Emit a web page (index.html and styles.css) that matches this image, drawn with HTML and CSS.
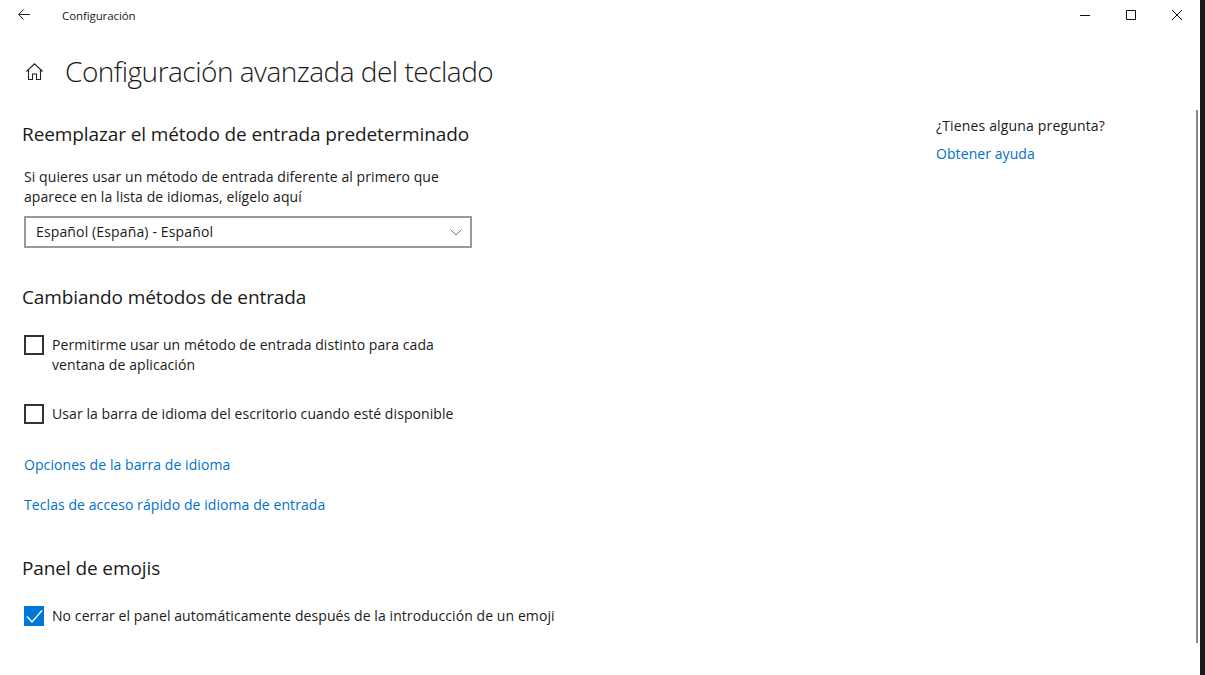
FILE: index.html
```html
<!DOCTYPE html>
<html lang="es">
<head>
    <meta charset="UTF-8">
    <title>Configuración</title>
    <link rel="stylesheet" href="styles.css">
</head>
<body>
    <div class="window">
        <header class="titlebar">
            <svg class="back-icon" viewBox="0 0 12 12">
                <path d="M5.500 .5L.7 5.500l4.800 5M.7 5.500H12"></path>
            </svg>
            <span class="app-name">Configuración</span>
            <div class="window-controls">
                <svg class="ctl" viewBox="0 0 10 10"><path d="M0 5.500h10"></path></svg>
                <svg class="ctl" viewBox="0 0 10 10"><path d="M.5 .5h9v9h-9z"></path></svg>
                <svg class="ctl" viewBox="0 0 10 10"><path d="M0 0l10 10M10 0L0 10"></path></svg>
            </div>
        </header>

        <div class="page-head">
            <svg class="home-icon" viewBox="0 0 17 17">
                <path d="M.4 8.500L8.500 .8l8.100 7.700M2.500 6.800v9.700h4V11h4v5.500h4V6.800"></path>
            </svg>
            <h1>Configuración avanzada del teclado</h1>
        </div>

        <div class="content">
            <main class="settings">
                <h2 class="first">Reemplazar el método de entrada predeterminado</h2>
                <p class="desc">Si quieres usar un método de entrada diferente al primero que aparece en la lista de idiomas, elígelo aquí</p>
                <div class="select">
                    <span>Español (España) - Español</span>
                    <svg class="chevron" viewBox="0 0 12 7"><path d="M.5 .5L6 6l5.500-5.500"></path></svg>
                </div>

                <h2 class="switching">Cambiando métodos de entrada</h2>
                <div class="check check-one">
                    <span class="box"></span>
                    <span class="check-label">Permitirme usar un método de entrada distinto para cada ventana de aplicación</span>
                </div>
                <div class="check check-two">
                    <span class="box"></span>
                    <span class="check-label wide">Usar la barra de idioma del escritorio cuando esté disponible</span>
                </div>
                <a class="link link-one" href="#">Opciones de la barra de idioma</a>
                <a class="link link-two" href="#">Teclas de acceso rápido de idioma de entrada</a>

                <h2 class="emoji">Panel de emojis</h2>
                <div class="check check-three">
                    <span class="box checked">
                        <svg viewBox="0 0 20 20"><path d="M3 10.500l5 5.500L18 4.500"></path></svg>
                    </span>
                    <span class="check-label wide">No cerrar el panel automáticamente después de la introducción de un emoji</span>
                </div>
            </main>
            <aside class="help">
                <div class="help-title">¿Tienes alguna pregunta?</div>
                <a class="link" href="#">Obtener ayuda</a>
            </aside>
        </div>
        <div class="scrollbar"></div>
    </div>
</body>
</html>
```

FILE: styles.css
```css
html, body {
    margin: 0;
    height: 100%;
}
body {
    background-color: #1b1b1b; /* dark strip right of the window */
    font-family: 'Open Sans', 'Noto Sans', sans-serif;
    font-size: 14px;
    letter-spacing: 0.08px;
    color: #1a1a1a;
    overflow: hidden;
}
.window {
    position: relative;
    width: 1200px;
    height: 675px;
    background-color: #ffffff;
}
.titlebar {
    display: flex;
    align-items: center;
    height: 30px;
}
.back-icon {
    width: 12px;
    height: 12px;
    margin-left: 18px;
    fill: none;
    stroke: #222;
    stroke-width: 1;
}
.app-name {
    margin-left: 32px;
    font-size: 11.500px;
    letter-spacing: -0.1px;
}
.window-controls {
    display: flex;
    gap: 36px;
    margin-left: auto;
    margin-right: 18px;
}
.ctl {
    width: 10px;
    height: 10px;
    fill: none;
    stroke: #111;
    stroke-width: 1;
}
.page-head {
    display: flex;
    align-items: center;
    height: 40px;
    margin-top: 21px;
}
.home-icon {
    width: 17px;
    height: 17px;
    margin-left: 26px;
    fill: none;
    stroke: #222;
    stroke-width: 1.1;
}
h1 {
    margin: 0 0 0 22px;
    font-size: 28px;
    font-weight: 300;
    letter-spacing: -0.5px;
    line-height: 40px;
}
.content {
    display: flex;
}
.settings {
    width: 936px;
    padding-left: 24px;
    box-sizing: border-box;
}
h2 {
    margin: 0 0 0 -2px;
    font-size: 19px;
    font-weight: 400;
    line-height: 28px;
    letter-spacing: -0.1px;
}
h2.first {
    margin-top: 29px;
}
h2.switching {
    margin-top: 35px;
}
h2.emoji {
    margin-top: 39px;
}
.desc {
    width: 440px;
    margin: 19px 0 0;
    line-height: 20px;
}
.select {
    display: flex;
    align-items: center;
    justify-content: space-between;
    width: 448px;
    height: 32px;
    margin-top: 9px;
    padding: 0 8px 2px 10px;
    box-sizing: border-box;
    border: 2px solid #999;
    letter-spacing: 0.14px;
}
.chevron {
    width: 12px;
    height: 7px;
    margin-top: 2px;
    fill: none;
    stroke: #777;
    stroke-width: 1;
}
.check {
    display: flex;
    align-items: flex-start;
}
.check-one {
    margin-top: 24px;
}
.check-two {
    margin-top: 29px;
}
.check-three {
    margin-top: 24px;
}
.box {
    flex: none;
    width: 20px;
    height: 20px;
    box-sizing: border-box;
    border: 2px solid #333;
}
.box.checked {
    border: none;
    background-color: #0078d7;
}
.box svg {
    display: block;
    fill: none;
    stroke: #fff;
    stroke-width: 1.4;
}
.check-label {
    width: 395px;
    margin-left: 8px;
    line-height: 20px;
}
.check-label.wide {
    width: auto;
}
.link {
    display: block;
    color: #0071cc;
    text-decoration: none;
    line-height: 20px;
}
.link-one {
    margin-top: 31px;
}
.link-two {
    margin-top: 20px;
}
.help {
    padding-top: 25px;
}
.help-title {
    line-height: 20px;
    margin-bottom: 8px;
    letter-spacing: 0.16px;
}
.scrollbar {
    position: absolute;
    top: 110px;
    left: 1196px;
    width: 2px;
    height: 533px;
    background-color: #8a8a8a;
}
```
